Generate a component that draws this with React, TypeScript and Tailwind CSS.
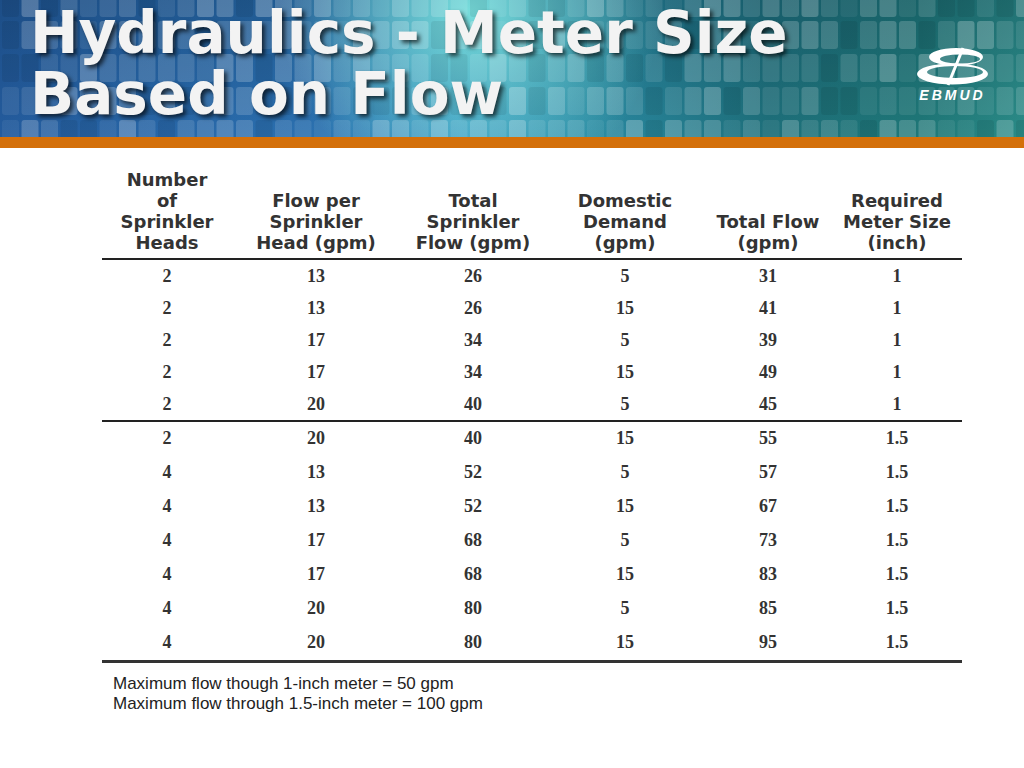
import React from "react";

const columns = [
  { w: "w-[130px]", head: ["Number", "of", "Sprinkler", "Heads"] },
  { w: "w-[168px]", head: ["Flow per", "Sprinkler", "Head (gpm)"] },
  { w: "w-[146px]", head: ["Total", "Sprinkler", "Flow (gpm)"] },
  { w: "w-[158px]", head: ["Domestic", "Demand", "(gpm)"] },
  { w: "w-[128px]", head: ["Total Flow", "(gpm)"] },
  { w: "w-[130px]", head: ["Required", "Meter Size", "(inch)"] },
];

const topRows = [
  ["2", "13", "26", "5", "31", "1"],
  ["2", "13", "26", "15", "41", "1"],
  ["2", "17", "34", "5", "39", "1"],
  ["2", "17", "34", "15", "49", "1"],
  ["2", "20", "40", "5", "45", "1"],
];

const bottomRows = [
  ["2", "20", "40", "15", "55", "1.5"],
  ["4", "13", "52", "5", "57", "1.5"],
  ["4", "13", "52", "15", "67", "1.5"],
  ["4", "17", "68", "5", "73", "1.5"],
  ["4", "17", "68", "15", "83", "1.5"],
  ["4", "20", "80", "5", "85", "1.5"],
  ["4", "20", "80", "15", "95", "1.5"],
];

const rnd = (i: number, j: number) => {
  const s = Math.sin(i * 12.9898 + j * 78.233) * 43758.5453;
  return s - Math.floor(s);
};

// mosaic of rounded tiles behind the title
const Mosaic = () => {
  const rowsY = [-11, 21, 54, 87, 120];
  const tiles: React.ReactNode[] = [];
  for (let j = 0; j < rowsY.length; j++) {
    for (let i = 0; i < 53; i++) {
      const v = rnd(i, j);
      const dark = v < 0.2;
      tiles.push(
        <rect
          key={`${i}-${j}`}
          x={2 + i * 19.5}
          y={rowsY[j]}
          width={17}
          height={28}
          rx={3}
          fill={dark ? "#000" : "#fff"}
          opacity={dark ? 0.07 : 0.06 + (v - 0.2) * 0.24}
        />
      );
    }
  }
  return (
    <svg
      className="absolute inset-0"
      width="1024"
      height="137"
      viewBox="0 0 1024 137"
    >
      <defs>
        <linearGradient id="base" x1="0" x2="1" y1="0" y2="0">
          <stop offset="0" stopColor="#245c9e" />
          <stop offset="0.3" stopColor="#2b70b0" />
          <stop offset="0.45" stopColor="#3290bd" />
          <stop offset="0.58" stopColor="#2a8aa2" />
          <stop offset="0.75" stopColor="#1e707b" />
          <stop offset="0.9" stopColor="#1f7878" />
          <stop offset="1" stopColor="#2b8c88" />
        </linearGradient>
        <radialGradient id="glow" cx="470" cy="10" r="190" gradientUnits="userSpaceOnUse">
          <stop offset="0" stopColor="#86eee6" stopOpacity="0.85" />
          <stop offset="1" stopColor="#86eee6" stopOpacity="0" />
        </radialGradient>
        <linearGradient id="shade" x1="0" x2="0" y1="0" y2="1">
          <stop offset="0" stopColor="#001830" stopOpacity="0.22" />
          <stop offset="1" stopColor="#001830" stopOpacity="0" />
        </linearGradient>
      </defs>
      <rect width="1024" height="137" fill="url(#base)" />
      <rect width="1024" height="137" fill="url(#shade)" />
      <rect width="1024" height="137" fill="url(#glow)" />
      {tiles}
    </svg>
  );
};

const Logo = () => (
  <div className="flex flex-col items-center">
    <svg width="75" height="42" viewBox="0 0 75 42">
      <path
        fillRule="evenodd"
        fill="#fff"
        d="M14 12 A27 9 0 0 0 68 12 A27 9 0 0 0 14 12 Z M25 14 A20 4.5 0 0 0 65 14 A20 4.5 0 0 0 25 14 Z"
      />
      <path
        fillRule="evenodd"
        fill="#fff"
        d="M2 29 A35.5 10.5 0 0 0 73 29 A35.5 10.5 0 0 0 2 29 Z M12 27 A28 6 0 0 0 68 27 A28 6 0 0 0 12 27 Z"
      />
      <path d="M33 40 L48 3" stroke="#fff" strokeWidth="3" />
    </svg>
    <div className="mt-[1px] text-[14px] leading-[14px] font-bold italic tracking-[3px] text-white font-['Liberation_Sans',Arial,sans-serif]">
      EBMUD
    </div>
  </div>
);

const Cells = ({ row }: { row: string[] }) => (
  <>
    {row.map((v, i) => (
      <div key={i} className={`${columns[i].w} text-center`}>
        {v}
      </div>
    ))}
  </>
);

const App = () => {
  return (
    <div className="w-[1024px] h-[768px] bg-white overflow-hidden">
      <div className="relative h-[137px]">
        <Mosaic />
        <div className="relative flex">
          <h1 className="pl-[30px] pt-[3px] text-[58px] leading-[61px] font-bold text-[#f3f3f3] font-['DejaVu_Sans',Verdana,sans-serif] [text-shadow:3px_3px_4px_rgba(0,0,0,0.65)]">
            Hydraulics - Meter Size
            <br />
            Based on Flow
          </h1>
          <div className="ml-auto mr-[34px] mt-[45px]">
            <Logo />
          </div>
        </div>
      </div>
      <div className="h-[11px] bg-[#d4700a]" />

      <div className="ml-[102px] w-[860px] mt-[21px]">
        <div className="flex items-end pb-[5px] text-[18px] leading-[21px] font-bold text-[#333] font-['DejaVu_Sans',Verdana,sans-serif]">
          {columns.map((c, i) => (
            <div key={i} className={`${c.w} text-center`}>
              {c.head.map((l, k) => (
                <div key={k}>{l}</div>
              ))}
            </div>
          ))}
        </div>
        <div className="h-[2px] bg-[#222]" />
        <div className="text-[18px] font-bold text-[#333] font-['Liberation_Serif','Times_New_Roman',serif]">
          {topRows.map((r, i) => (
            <div key={i} className="flex h-[32px] items-center pt-[1px]">
              <Cells row={r} />
            </div>
          ))}
          <div className="h-[1.5px] bg-[#222]" />
          {bottomRows.map((r, i) => (
            <div key={i} className="flex h-[34px] items-center">
              <Cells row={r} />
            </div>
          ))}
        </div>
        <div className="h-[3px] bg-[#333]" />
        <div className="pl-[11px] pt-[11px] text-[17px] leading-[20px] text-[#222] font-['Liberation_Sans',Arial,sans-serif]">
          <div>Maximum flow though 1-inch meter = 50 gpm</div>
          <div>Maximum flow through 1.5-inch meter = 100 gpm</div>
        </div>
      </div>
    </div>
  );
};

export default App;
